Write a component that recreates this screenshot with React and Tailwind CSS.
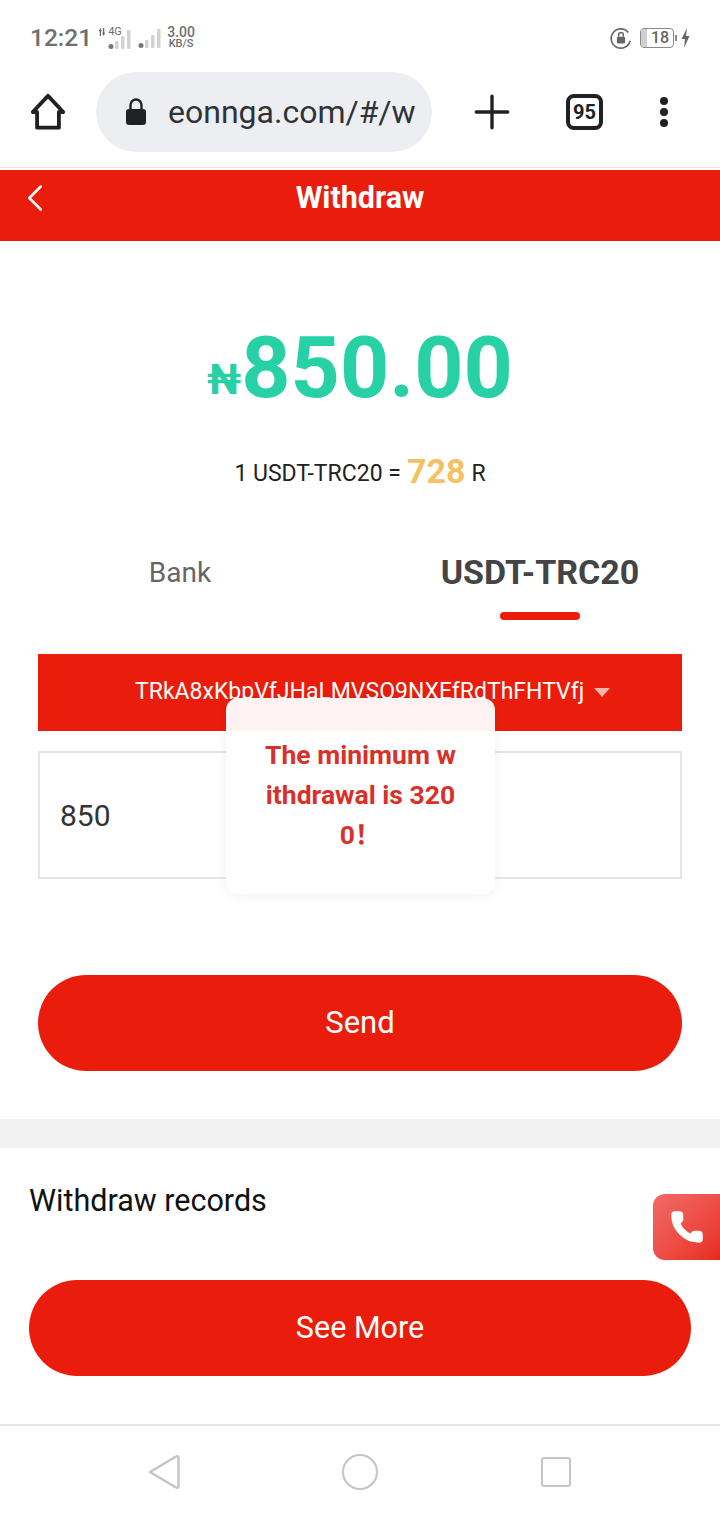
import React from 'react';
import { Plus, ChevronLeft, Phone } from 'lucide-react';

const roboto = { fontFamily: 'Roboto, "Noto Sans CJK SC", sans-serif' };

function Signal() {
    return (
        <svg width="24" height="22" viewBox="0 0 24 22">
            <circle cx="3" cy="18.5" r="2.5" fill="#777" />
            <rect x="7" y="13" width="3.5" height="8" rx="1" fill="#d2d2d2" />
            <rect x="13" y="8" width="3.5" height="13" rx="1" fill="#d2d2d2" />
            <rect x="19" y="2" width="3.5" height="19" rx="1" fill="#d2d2d2" />
        </svg>
    );
}

function StatusBar() {
    return (
        <div className="h-[70px] flex items-center justify-between pl-[30px] pr-[30px] pt-[6px] text-[#6f6f6f]">
            <div className="flex items-center">
                <span className="text-[24.5px] font-medium leading-none">12:21</span>
                <div className="relative ml-[6px] w-[34px] h-[26px]">
                    <svg className="absolute left-0 top-[2px]" width="8" height="10" viewBox="0 0 10 10">
                        <path d="M3 0 L5 4 H3.8 V10 H2.2 V4 H1 Z M7 10 L5 6 H6.2 V0 H7.8 V6 H9 Z" fill="#666" />
                    </svg>
                    <span className="absolute left-[10px] top-0 text-[11px] leading-[14px]">4G</span>
                    <div className="absolute left-[10px] top-[3px]">
                        <Signal />
                    </div>
                </div>
                <div className="ml-[6px] mr-[5px]">
                    <Signal />
                </div>
                <div className="flex flex-col items-center text-[14px] font-medium leading-[12px]">
                    <span>3.00</span>
                    <span className="text-[11px]">KB/S</span>
                </div>
            </div>
            <div className="flex items-center">
                <svg width="22" height="22" viewBox="0 0 24 24" fill="none">
                    <path d="M20 6 A10.5 10.5 0 1 0 22 15" stroke="#666" strokeWidth="1.8" />
                    <rect x="7.5" y="10.5" width="9" height="7.5" rx="1.5" fill="#666" />
                    <path d="M9.5 10.5 V8.5 a2.5 2.5 0 0 1 5 0 V10.5" stroke="#666" strokeWidth="1.6" />
                </svg>
                <div className="ml-[8px] w-[34px] h-[20px] border border-[#8a8a8a] rounded-[4px] flex items-center overflow-hidden">
                    <div className="w-[6px] h-full bg-[#cfcfcf]" />
                    <span className="flex-1 text-center text-[16px] font-medium leading-none text-[#666]">18</span>
                </div>
                <div className="w-[2px] h-[6px] ml-[1px] bg-[#8a8a8a]" />
                <svg className="ml-[4px]" width="9" height="20" viewBox="0 0 9 20">
                    <path d="M6 0 L0.5 11 H4 L3 20 L8.5 8 H5 Z" fill="#666" />
                </svg>
            </div>
        </div>
    );
}

function BrowserBar() {
    return (
        <div className="h-[98px] border-b border-[#eee0d8] flex items-center pl-[30px] pb-[14px]">
            <svg width="36" height="38" viewBox="0 0 36 40" fill="none">
                <path d="M18 3 L34 20 H29.5 V36.5 H6.5 V20 H2 Z" stroke="#202124" strokeWidth="4" strokeLinejoin="round" />
            </svg>
            <div className="ml-[30px] w-[336px] h-[80px] rounded-full bg-[#eceef1] flex items-center pl-[29px]">
                <svg width="22" height="28" viewBox="0 0 22 28" fill="none">
                    <path d="M5.5 13 V7 a5.5 5.5 0 0 1 11 0 V13" stroke="#202124" strokeWidth="2.4" />
                    <rect x="1" y="11" width="20" height="16" rx="3" fill="#202124" />
                </svg>
                <span className="ml-[21px] text-[32px] leading-none text-[#303236]">eonnga.com/#/w</span>
            </div>
            <Plus className="ml-[33px] text-[#202124]" size={54} strokeWidth={1.5} />
            <div className="ml-[47px] w-[37px] h-[36px] border-[4px] border-[#202124] rounded-[8px] flex items-center justify-center text-[#202124] text-[20px] font-bold leading-none">
                95
            </div>
            <div className="ml-[57px] flex flex-col gap-[3px]">
                <div className="w-[8px] h-[8px] rounded-full bg-[#202124]" />
                <div className="w-[8px] h-[8px] rounded-full bg-[#202124]" />
                <div className="w-[8px] h-[8px] rounded-full bg-[#202124]" />
            </div>
        </div>
    );
}

function Toast() {
    return (
        <div className="absolute left-[226px] top-[698px] w-[269px] h-[196px] rounded-[12px] bg-white/95 shadow-[0_2px_12px_rgba(0,0,0,0.06)] pt-[37px] px-[20px] text-center text-[26.5px] font-bold leading-[40px] text-[#d9302a]">
            <div>The minimum w</div>
            <div>ithdrawal is 320</div>
            <div>0！</div>
        </div>
    );
}

export default function App() {
    return (
        <div className="relative w-[720px] h-[1520px] overflow-hidden bg-white" style={roboto}>
            <StatusBar />
            <BrowserBar />

            <div className="mt-[2px] h-[71px] bg-[#ea1d0c] relative flex items-center justify-center">
                <ChevronLeft className="absolute left-[12px] top-[5px] text-white" size={46} strokeWidth={1.3} />
                <span className="text-white text-[30.5px] font-bold leading-none mb-[17px] mt-[2px]">Withdraw</span>
            </div>

            {/* amount */}
            <div className="mt-[70px] h-[100px] flex items-end justify-center text-[#28d1a5] font-bold leading-none">
                <span className="text-[42px] mb-[10px]">₦</span>
                <span className="text-[86px]">850.00</span>
            </div>
            <div className="mt-[41px] h-[44px] flex items-center justify-center text-[23px] text-[#222]">
                <span>1 USDT-TRC20 =</span>
                <span className="mx-[6px] mb-[5px] text-[34px] font-bold text-[#f5c263]">728</span>
                <span>R</span>
            </div>

            {/* tabs */}
            <div className="mt-[45px] grid grid-cols-2">
                <div className="h-[90px] pt-[12px] text-center text-[28px] leading-[40px] text-[#666]">Bank</div>
                <div className="h-[90px] flex flex-col items-center pt-[10px]">
                    <span className="text-[34px] font-bold leading-[42px] text-[#444]">USDT-TRC20</span>
                    <div className="mt-[19px] w-[80px] h-[8px] rounded-full bg-[#ea1d0c]" />
                </div>
            </div>

            {/* form */}
            <div className="mt-[23px] mx-[38px] h-[77px] bg-[#ea1d0c] flex items-center pl-[97px] text-white text-[23px]">
                <span>TRkA8xKbpVfJHaLMVSO9NXEfRdThFHTVfj</span>
                <div className="ml-[10px] w-0 h-0 border-x-[8px] border-x-transparent border-t-[9px] border-t-[#f7b5ae]" />
            </div>
            <div className="mt-[20px] mx-[38px] h-[128px] border-2 border-[#e5e5e5] flex items-center pl-[20px] text-[30px] text-[#333]">
                850
            </div>
            <div className="mt-[96px] mx-[38px] h-[96px] rounded-full bg-[#ea1d0c] flex items-center justify-center text-white text-[31px]">
                Send
            </div>

            <div className="mt-[48px] h-[29px] bg-[#f2f2f2]" />

            {/* records */}
            <div className="mt-[33px] ml-[29px] text-[30.5px] leading-[40px] text-[#111]">Withdraw records</div>
            <div className="mt-[59px] mx-[29px] h-[96px] rounded-full bg-[#ea1d0c] flex items-center justify-center text-white text-[30.5px]">
                See More
            </div>

            {/* android nav */}
            <div className="mt-[48px] border-t-2 border-[#e5e5e5] h-[94px] grid grid-cols-3 items-center justify-items-center px-[66px]">
                <svg width="32" height="36" viewBox="0 0 32 36" fill="none">
                    <path d="M2 18 L28 2.5 Q30.5 1.5 30.5 4 V32 Q30.5 34.5 28 33.5 Z" stroke="#c4c4c4" strokeWidth="2.4" strokeLinejoin="round" />
                </svg>
                <div className="w-[36px] h-[36px] rounded-full border-2 border-[#c4c4c4]" />
                <div className="w-[30px] h-[30px] rounded-[3px] border-2 border-[#c4c4c4]" />
            </div>

            <Toast />

            <div className="absolute right-0 top-[1194px] w-[67px] h-[66px] rounded-l-[12px] bg-gradient-to-br from-[#f26a68] to-[#e8291c] flex items-center justify-center">
                <Phone className="text-white fill-white" size={36} strokeWidth={1} />
            </div>
        </div>
    );
}
